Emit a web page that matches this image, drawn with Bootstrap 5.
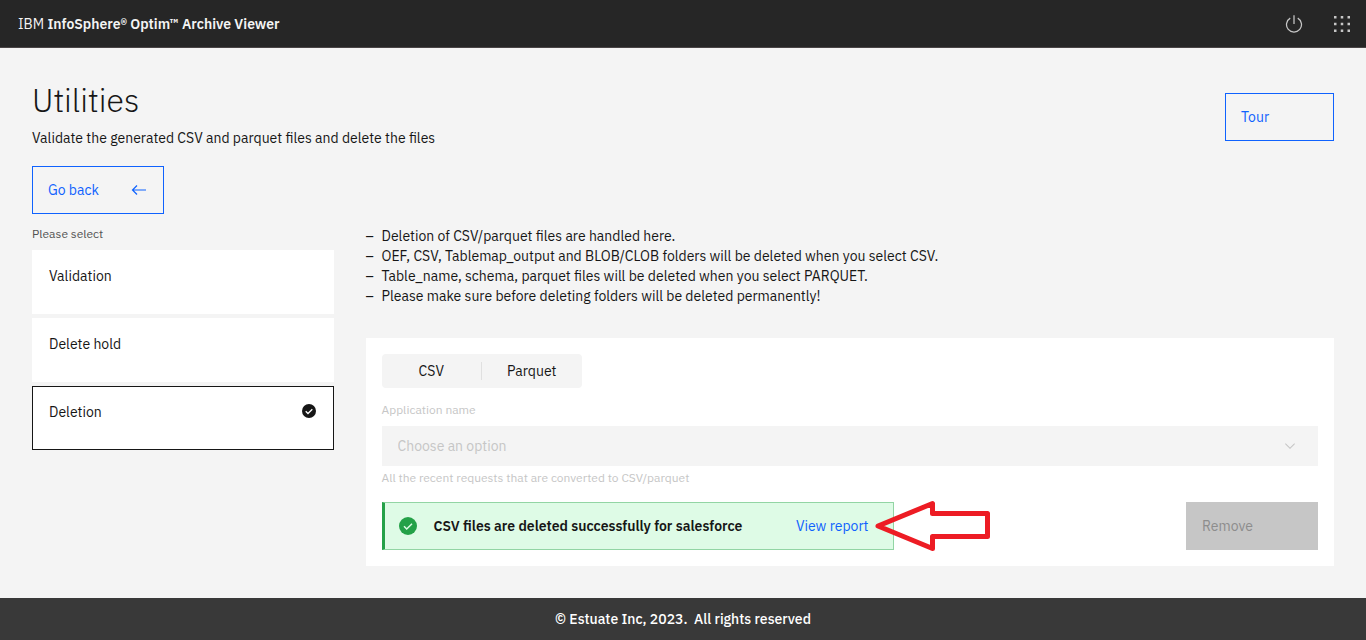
<!DOCTYPE html>
<html lang="en">
<head>
<meta charset="utf-8">
<meta name="viewport" content="width=device-width, initial-scale=1">
<title>Archive Viewer - Utilities</title>
<link href="https://cdn.jsdelivr.net/npm/bootstrap@5.3.0/dist/css/bootstrap.min.css" rel="stylesheet">
<style>
  :root { --blue: #0f62fe; --ink: #161616; --layer: #f4f4f4; --faint: #c6c6c6; --green: #24a148; }
  body { font-family: "IBM Plex Sans", Inter, "Liberation Sans", sans-serif; font-size: 14px; line-height: 20px; color: var(--ink); background: var(--layer); }
  .top-bar { height: 48px; background: #262626; border-bottom: 1px solid #4a4546; padding: 0 14px 0 18px; }
  .brand { color: #f4f4f4; }
  .brand strong { font-weight: 600; }
  .icon-btn { color: #c6c6c6; line-height: 0; }
  .page { padding: 32px; }
  .page-title { font-size: 32px; line-height: 40px; font-weight: 300; margin-bottom: 8px; }
  .box-btn { --bs-btn-font-size: 14px; --bs-btn-line-height: 20px; --bs-btn-padding-x: 15px; --bs-btn-border-radius: 0; --bs-btn-color: var(--blue); --bs-btn-border-color: var(--blue); --bs-btn-hover-bg: var(--blue); --bs-btn-hover-color: #fff; height: 48px; text-align: left; }
  .w-tour { width: 109px; margin-top: 13px; }
  .w-wide { width: 132px; }
  .go-back { margin-top: 18px; padding-right: 14px; }
  .remove { --bs-btn-disabled-bg: #c6c6c6; --bs-btn-disabled-border-color: #c6c6c6; --bs-btn-disabled-color: #8d8d8d; --bs-btn-disabled-opacity: 1; }
  .main-row { --bs-gutter-x: 32px; }
  .caption-text { font-size: 12px; line-height: 16px; }
  .muted { color: #525252; }
  .tile { min-height: 64px; background: #fff; border: 1px solid #fff; padding: 15px 16px; }
  .tile.selected { border-color: var(--ink); }
  .tile svg { margin-top: 1px; }
  .notes { list-style: none; padding: 0; margin: 0 0 32px; }
  .notes li { display: flex; }
  .notes li::before { content: "–"; width: 16px; flex: none; }
  .segments { width: 200px; height: 34px; background: var(--layer); border-radius: 4px; }
  .segments label { flex: 1; line-height: 18px; text-align: center; cursor: pointer; }
  .segments label + input + label { border-left: 1px solid #e0e0e0; }
  .app-label { margin: 14px 0 8px; }
  .faint { color: var(--faint); }
  .app-select { height: 40px; border: 0; border-radius: 0; padding: 10px 48px 10px 16px; font-size: 14px; line-height: 20px; background-size: 16px; background-position: right 20px center;
    background-image: url("data:image/svg+xml,%3Csvg xmlns='http://www.w3.org/2000/svg' viewBox='0 0 16 16'%3E%3Cpath fill='%23c6c6c6' d='M8 11L3 6 3.7 5.3 8 9.6 12.3 5.3 13 6z'/%3E%3C/svg%3E"); }
  .app-select:disabled { color: var(--faint); background-color: var(--layer); opacity: 1; }
  .notice { width: 512px; height: 48px; background-color: #defbe6; border: 1px solid #92d5a4; border-left: 3px solid var(--green); border-radius: 0; padding: 0 24px 0 13px; margin: 0; color: var(--ink); }
  .notice strong { font-weight: 600; margin-left: 16px; }
  .notice a { color: var(--blue); }
  .pointer { position: absolute; left: 487px; top: -4px; pointer-events: none; }
  .foot { background: #393939; color: #fff; height: 42px; white-space: pre; font-weight: 500; }
</style>
</head>
<body>
<header class="top-bar d-flex align-items-center justify-content-between">
  <div class="brand">IBM <strong>InfoSphere® Optim™ Archive Viewer</strong></div>
  <div class="d-flex align-items-center gap-4">
    <button type="button" class="icon-btn btn border-0 p-0 me-1" aria-label="Log out">
      <svg width="20" height="20" viewBox="0 0 32 32" fill="currentColor"><path d="M22.5 5.74l-1 1.73a11 11 0 1 1-11 0l-1-1.73a13 13 0 1 0 13 0zM15 2h2v14h-2z"/></svg>
    </button>
    <button type="button" class="icon-btn btn border-0 p-0" aria-label="App switcher">
      <svg width="20" height="20" viewBox="0 0 32 32" fill="currentColor"><path d="M3.200 3.200h4v4h-4zM14 3.200h4v4h-4zM24.800 3.200h4v4h-4zM3.200 14h4v4h-4zM14 14h4v4h-4zM24.800 14h4v4h-4zM3.200 24.800h4v4h-4zM14 24.800h4v4h-4zM24.800 24.800h4v4h-4z"/></svg>
    </button>
  </div>
</header>
<main class="page container-fluid">
  <div class="d-flex justify-content-between align-items-start">
    <div>
      <h1 class="page-title">Utilities</h1>
      <p class="mb-0">Validate the generated CSV and parquet files and delete the files</p>
    </div>
    <button type="button" class="btn box-btn w-tour">Tour</button>
  </div>
  <button type="button" class="btn box-btn w-wide d-flex align-items-center justify-content-between go-back">Go back
    <svg width="20" height="20" viewBox="0 0 20 20" fill="none" stroke="currentColor" stroke-width="1.200"><path d="M17 10H3.500M8 5.500L3.500 10 8 14.500"/></svg>
  </button>
  <div class="row main-row mt-1 pt-2">
    <nav class="col-3" aria-labelledby="pick">
      <div id="pick" class="caption-text muted mb-2">Please select</div>
      <div class="d-grid gap-1">
        <a href="#" class="tile text-reset text-decoration-none">Validation</a>
        <a href="#" class="tile text-reset text-decoration-none">Delete hold</a>
        <a href="#" class="tile selected text-reset text-decoration-none d-flex justify-content-between" aria-current="true">Deletion
          <svg width="16" height="16" viewBox="0 0 16 16" aria-hidden="true"><circle cx="8" cy="8" r="7" fill="#161616"/><path d="M4.700 8.200L7 10.500l4.300-4.300" fill="none" stroke="#fff" stroke-width="1.300"/></svg>
        </a>
      </div>
    </nav>
    <section class="col-9">
      <ul class="notes">
        <li>Deletion of CSV/parquet files are handled here.</li>
        <li>OEF, CSV, Tablemap_output and BLOB/CLOB folders will be deleted when you select CSV.</li>
        <li>Table_name, schema, parquet files will be deleted when you select PARQUET.</li>
        <li>Please make sure before deleting folders will be deleted permanently!</li>
      </ul>
      <form class="bg-white p-3">
        <div class="segments d-flex align-items-center" role="group" aria-label="File type">
          <input type="radio" class="btn-check" name="kind" id="csv"><label for="csv">CSV</label>
          <input type="radio" class="btn-check" name="kind" id="parquet"><label for="parquet">Parquet</label>
        </div>
        <label for="app" class="app-label caption-text faint d-block">Application name</label>
        <select id="app" class="form-select app-select" disabled><option>Choose an option</option></select>
        <div class="caption-text faint mt-1 mb-3">All the recent requests that are converted to CSV/parquet</div>
        <div class="d-flex justify-content-between">
          <div class="notice alert d-flex align-items-center" role="status">
            <svg width="20" height="20" viewBox="0 0 20 20" aria-hidden="true"><circle cx="10" cy="10" r="9" fill="#24a148"/><path d="M6 10.300l2.700 2.700 5.300-5.300" fill="none" stroke="#defbe6" stroke-width="1.500"/></svg>
            <strong>CSV files are deleted successfully for salesforce</strong>
            <a href="#" class="ms-auto text-decoration-none">View report</a>
            <svg class="pointer" width="124" height="56" viewBox="0 0 124 56" fill="none" stroke="#ed1c24" stroke-width="5" stroke-linejoin="round" aria-hidden="true"><path d="M6 27L60.500 4.500V14.500H115.500V37.500H60.500V49.500z"/></svg>
          </div>
          <button type="button" class="btn box-btn remove w-wide" disabled>Remove</button>
        </div>
      </form>
    </section>
  </div>
</main>
<footer class="foot d-flex align-items-center justify-content-center">© Estuate Inc, 2023.  All rights reserved</footer>
<script src="https://cdn.jsdelivr.net/npm/bootstrap@5.3.0/dist/js/bootstrap.bundle.min.js"></script>
</body>
</html>
